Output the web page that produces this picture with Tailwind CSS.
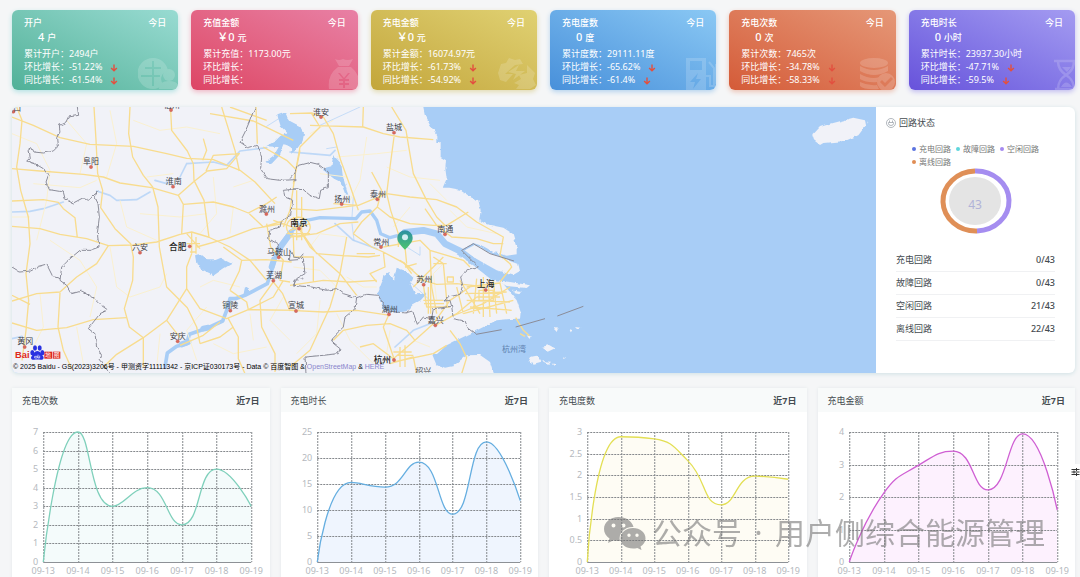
<!DOCTYPE html>
<html lang="zh-CN">
	<head>
		<title>充电运营看板</title>
		<meta charset="utf-8" />
		<meta name="viewport" content="width=device-width, initial-scale=1" />
		<script src="https://cdn.jsdelivr.net/npm/@tailwindcss/browser@4"></script>
	</head>
	<body class="h-screen overflow-hidden bg-[#f5f6f7] font-['Noto_Sans','Noto_Sans_CJK_SC',sans-serif] text-[9px] leading-[13px] text-[#444b50]">
		<main class="flex flex-col pl-3 pr-[5px] pt-[10px]">

			<!-- summary cards -->
			<section id="cards" class="grid grid-cols-6 gap-[13px]"></section>

			<!-- map + loop status -->
			<section class="mt-[17px] flex rounded-md bg-white shadow-[0_1px_4px_#cfe0e4]">
				<div class="relative min-w-0 flex-1 overflow-hidden rounded-l-md">
					<svg class="block h-[266px] w-full" viewBox="36 20 2592 800" preserveAspectRatio="xMinYMin slice">
						<defs>
							<filter id="rough" x="-5%" y="-5%" width="110%" height="110%">
								<feTurbulence type="fractalNoise" baseFrequency="0.06" numOctaves="2" seed="4" />
								<feDisplacementMap in="SourceGraphic" scale="10" xChannelSelector="R" yChannelSelector="G" />
							</filter>
							<linearGradient id="pin" x1="0" y1="0" x2="0" y2="1">
								<stop offset="0" stop-color="#2c8fa3" />
								<stop offset="1" stop-color="#4cc56f" />
							</linearGradient>
						</defs>
						<rect x="0" y="0" width="2700" height="840" fill="#a8cdf6" />

						<!-- land -->
						<g fill="#f1f2f8" filter="url(#rough)">
							<path d="M0 0H1266L1275 45L1290 75L1312 105V128H1322V170L1338 180L1336 205L1340 235L1328 262L1348 262L1380 268L1415 292L1435 300L1442 330L1438 360L1460 372L1510 382L1538 400L1550 440V462L1520 466L1480 455L1450 438L1420 428L1385 448L1370 462L1430 500L1470 530L1510 550L1530 575L1550 600L1562 635L1560 655L1530 656L1490 660L1450 680L1410 700L1370 720L1340 735L1310 762L1295 758L1308 790L1335 802L1360 797L1400 765L1440 764L1470 785L1485 830H0Z" />
							<path d="M1390 452L1425 433L1475 460L1555 492L1560 512L1538 525L1490 510L1430 476Z" />
							<path d="M1490 540L1530 545L1590 555L1580 563L1520 557ZM1540 568L1565 572L1558 582L1542 578Z" />
							<path d="M1625 740l22-6 18 10-22 10zM1590 770l20-4 14 18-22 6-18-8zM1625 782l28 2-6 8zM1660 680l14 2-4 10zM1708 686l10 4-6 6zM1725 680l16 2-8 6zM1690 768l8 4-8 4zM1580 705l16 4-8 6zM1655 790l14 0-8 6z" />
							<path d="M2437 105L2460 80L2500 68L2560 52L2595 60L2598 75L2575 105L2535 122L2470 128L2460 134L2442 120ZM2602 64l6 2-4 4z" />
						</g>

						<!-- rivers and lakes -->
						<g fill="#a8cdf6" filter="url(#rough)">
							<path d="M832 45L852 38L870 62L900 78L912 100L908 122L888 150L875 158L872 140L850 132L836 168L815 190L795 186L822 165L836 140L798 138L826 122L842 106L862 98L842 78Z" />
							<path d="M1000 165L1024 190L1028 225L1040 270L1045 283L1036 282L1022 245L1002 235L965 205L994 198Z" />
							<path d="M585 465L600 462L622 480L642 480L660 472L695 490L670 505L642 525L615 512L590 495Z" />
							<path d="M1150 525L1168 515L1182 540L1190 502L1218 512L1240 532L1232 552L1246 582L1280 580L1262 600L1240 612L1222 632L1190 638L1150 628L1132 580L1146 545Z" />
							<path d="M735 560L748 568L745 582L730 585Z" />
						</g>
						<g fill="none" stroke="#a8cdf6" stroke-linejoin="round" stroke-linecap="round">
							<path stroke-width="11" d="M495 800L502 758L530 738L560 730L568 702L620 684L668 662L682 625L690 595L706 595L735 585L802 550L818 500L836 440L870 395L920 360" />
							<path stroke-width="18" d="M815 500L822 478M838 445L872 398M545 732L565 725M610 685L625 682" />
							<path stroke-width="10" d="M920 360L960 352L1068 355L1085 335L1110 332L1130 360L1142 400L1170 412L1215 400" />
							<path stroke-width="20" d="M1215 396L1270 390L1310 400L1335 430L1380 452L1430 490L1480 530" />
							<path stroke-width="5" d="M36 335L90 333L130 325L190 305M290 272L330 285L350 300L410 298L450 275M465 240L500 250L500 238M36 715L66 708M560 190L640 185L680 195L720 152L800 142M540 230L560 190M870 155L930 160L990 165L1005 150M1005 370L1060 420L1130 445M1185 740L1240 690L1290 670" stroke-opacity=".7" />
							<path stroke-width="3" stroke-opacity=".6" d="M960 75L1080 20M800 78L860 40M980 145L1010 140M1230 545L1290 600L1340 600M1220 440L1260 465L1260 440M1060 290L1056 350M1056 370L1062 420" />
						</g>

						<!-- minor roads -->
						<g fill="none" stroke="#faf0cf" stroke-width="3" stroke-linejoin="round">
							<path d="M36 100L110 130L150 210L140 300L110 420M90 350L36 350M100 250L240 262L290 240M150 420L240 480L290 560L270 650M200 60L260 130L240 220M330 30L350 130L320 230M400 60L480 90L560 80L660 100M440 230L520 220M360 300L380 380L470 420M420 340L540 350L620 340M330 440L350 560L390 590L480 560L500 520M640 230L650 340L600 400M600 560L640 540L720 560M620 620L560 690L590 780M480 700L470 800M120 580L130 680L90 760M230 680L250 790M640 730L700 760L800 740M750 640L760 720M700 320L690 400M760 240L700 260M850 590L810 660L870 720" />
							<path d="M930 100L1000 60M1010 170L1130 160L1220 150M960 220L1040 230M1160 200L1230 230L1320 240M1050 300L1080 240L1100 110M1230 320L1180 380M930 440L960 400L1040 410M880 500L960 510L1010 560M960 600L950 700L890 760M1010 640L1050 720L1120 790M1170 690L1160 760M1240 720L1290 740M1330 490L1300 520L1310 600M1040 530L1090 560L1130 560M1350 330L1400 380L1490 400M1290 250L1340 300" />
						</g>

						<!-- major roads -->
						<g fill="none" stroke="#f8dc8e" stroke-width="4" stroke-linejoin="round">
							<path d="M36 50L100 75L180 112L270 132L400 138L500 160L560 174L640 178L720 210L765 245L825 310M50 20L66 60L60 130L50 200L62 270L85 350L90 430L78 520L86 600L78 690L66 780M282 20L288 120L293 220L308 270L302 322L345 385L392 430L400 470L398 540L373 625L388 680L430 712V800" />
							<path d="M36 205L120 212L250 222L310 230L360 248L455 262L535 285L550 312L545 400M390 20L386 100L398 170L430 225L458 260L474 320L478 440L500 560L562 622L590 680L600 730M36 302L130 298L175 306L190 325L225 352L232 412M36 378L120 385L180 402L260 415L325 436L400 434L470 425L540 402L575 395L625 410L690 440L750 480L800 540" />
							<path d="M512 30L515 90L562 152L580 190L582 240L612 300L627 412M665 20L682 75L705 150L718 212M550 312L640 305L700 320L745 338L800 310L830 290M535 285L580 245L622 212L680 205L718 160L640 165L618 212M610 115L620 150L608 180M748 340L790 380L850 362M590 440L680 415L760 385L850 370" />
							<path d="M575 460L560 500V565L600 625L680 655L745 628L900 630M560 565L500 660L430 712L350 762L310 800M325 436L290 490L230 530L180 575L110 580L36 602M36 585L90 612M180 578L174 680L190 750L215 805M36 668L110 690L200 682L280 658L380 652M500 660L540 712M685 655L715 710V775L735 820M660 665L610 705L540 735M690 570L740 605L745 628M690 570L718 512L725 480L800 478L875 485M725 480L670 440M820 545L780 600L785 680L825 760V815" />
							<path d="M820 545L848 580L870 632M800 370L812 440L850 480L840 540L870 545M768 20L772 130M790 140L860 180L890 210M850 380L870 330L886 220L900 150M690 20L800 60M630 40L760 62L880 120M820 360L890 385M745 628L820 590L850 540M600 730L660 710L700 680" />
							<path d="M870 40L935 38L970 50L1000 100L1022 180L1048 250L1075 330M930 75L1090 80L1150 100L1200 110L1300 118M935 40L960 80L900 140L880 250M1090 20L1088 80M1175 20L1218 90L1228 150L1240 220L1280 300L1310 350L1335 375M1182 110L1170 200L1160 280L1172 330L1195 400V440M1000 310L1075 315L1160 280L1230 290L1310 298L1370 320L1430 365L1510 410L1500 465L1530 490L1535 500L1500 545" />
							<path d="M870 325L950 330L1070 315M1115 215L1145 270L1132 320L1085 365L1060 400M1132 320L1170 350L1230 370L1300 375L1340 375L1405 335M1275 325L1310 375L1355 410L1430 415L1480 430H1510M897 385L950 460L1015 465L1105 470L1140 465M870 410L950 400L1020 370L1075 365M880 410L882 470L940 470V545M870 555L970 540L1050 545L1130 540M897 385L930 440L1020 520L1070 585M1040 410L1020 520L990 620L930 750L870 800" />
							<path d="M1060 400L1115 440L1150 455L1215 490L1270 540L1310 552L1370 550L1457 560M1150 455L1155 500L1110 520L1130 545M1070 460H1125M1215 440L1220 490M1150 440L1260 420L1290 450L1390 480L1410 500M1290 450L1295 560L1310 640M1240 560L1330 470M1300 470L1330 490M1300 490H1340M870 630L970 635L1070 630L1170 645M1167 642L1150 680L1182 775M1000 720L1030 690L1100 675L1170 670L1220 690L1245 720" />
							<path d="M1180 775L1245 720L1300 670L1350 600L1410 560M1306 675L1370 640L1430 590M1350 690L1380 730L1400 772L1385 820M1180 775L1120 730L1080 740M1270 553L1280 620L1350 620M1180 785L1300 760L1340 735M1270 600H1330M1272 610H1332M1285 560V640M1292 540V640M1342 530H1360V545H1342ZM1330 490L1342 620M1170 790L1240 770L1250 820M1200 740V800M1215 735V800M1180 755H1235M1190 765H1240" />
							<path d="M1547 652L1570 690L1588 706M1560 700L1575 708" />
							<path d="M1400 560L1500 548M1395 580L1520 575M1400 600L1530 605M1410 620L1535 630M1380 540L1440 640M1430 535L1420 640M1450 530L1450 650M1465 540L1470 650M1480 540L1490 640M1500 548L1520 640M1370 560L1390 640M1390 640L1540 600M1430 590L1500 590M1350 650L1450 610L1530 560M1437 570H1480V600H1437Z" />
							<path d="M860 375a34 28 0 1 0 70 10a34 28 0 1 0 -70 -10M870 390L930 370M890 270V420M905 290V420M880 350L920 420M860 400H930M1200 480L1240 510M1215 500L1250 490M1210 485L1235 520M560 430H600M570 455H590M575 395V460M588 410V460M560 400L600 445" />
						</g>

						<!-- province borders -->
						<g fill="none" stroke="#8b8c98" stroke-width="3" stroke-linejoin="round" filter="url(#rough)">
							<path d="M232 20L236 45L205 50L198 65L178 75L180 95L170 112L172 140L160 152L130 158L102 155L95 142L84 150L88 175L80 182L105 190L130 205L145 225L138 245L148 268L190 275L195 295L220 308L250 292L265 300L295 272L285 290L294 310L298 350L292 400L297 440L270 450L240 450L210 475L185 500L180 540L200 555L215 580L245 572L280 590L300 610L325 628L300 640L278 668L265 685L285 700L290 740L305 765L300 780L330 820" />
							<path d="M36 500L60 515L92 512L118 498L140 492L158 528L180 535M765 20L750 60L735 95L720 125L745 142L770 135L785 170L782 205L800 235L840 240L888 238V210M895 265L850 270L855 290L878 300L872 345L845 360L840 380L810 390L806 415L835 432L838 445M870 465L868 480L895 478L910 460M882 560L885 540L910 535" />
							<path d="M870 235L885 218L895 195L930 186L955 192L985 215V262L962 270L958 295L930 285L910 268L870 265M870 450L880 470L910 475L915 520L890 535L880 555L935 560L980 570L1010 565L1030 580L1070 592L1100 582L1135 585L1150 612L1165 632L1215 638L1238 632L1252 672L1270 650L1295 655L1300 625L1355 618L1360 655L1395 662L1405 685L1428 702" />
							<path d="M1355 618L1350 600L1332 602L1345 590L1380 582L1388 555L1382 530L1400 512L1435 500L1385 450M1070 592L1065 625L1035 650L1030 680L1000 710L995 725L1020 745L1015 760L970 765L915 770L918 820" />
						</g>
						<path d="M1385 450L1420 430L1470 460L1542 482M1428 702L1505 688M1547 680L1635 655M1672 647L1750 618" fill="none" stroke="#8b8c98" stroke-width="3" />

						<!-- cities -->
						<g id="cities" font-size="24" text-anchor="middle" fill="#3d3f47"></g>

						<g>
							<path d="M1215 448C1198 430 1192 424 1192 412a23 22 0 0 1 46 0C1238 424 1232 430 1215 448Z" fill="url(#pin)" />
							<circle cx="1215" cy="411" r="9" fill="#d3edf2" />
						</g>

						<!-- Baidu mark -->
						<g>
							<text x="45" y="774" font-family="Liberation Sans" font-weight="700" font-size="28" fill="#df2a20">Bai</text>
							<rect x="133" y="754" width="23" height="21" fill="#df2a20" />
							<rect x="158" y="754" width="23" height="21" fill="#df2a20" />
							<text x="136" y="771" font-size="17" fill="#fff">地</text>
							<text x="161" y="771" font-size="17" fill="#fff">图</text>
							<g fill="#2932e1">
								<ellipse cx="97" cy="757" rx="6" ry="8" />
								<ellipse cx="105" cy="743" rx="6" ry="8" />
								<ellipse cx="119" cy="743" rx="6" ry="8" />
								<ellipse cx="127" cy="757" rx="6" ry="8" />
								<path d="M112 752c8 0 12 10 16 14 6 6 2 13-6 12-6-1-14-1-20 0-8 1-12-6-6-12 4-4 8-14 16-14z" />
							</g>
							<path d="M104 768h8v5h-8zM114 763v10h5v-7" fill="none" stroke="#fff" stroke-width="2" />
						</g>
					</svg>
					<p class="absolute bottom-0 left-px whitespace-nowrap font-['Liberation_Sans','Noto_Sans_CJK_SC',sans-serif] text-[7px] text-black">© 2025 Baidu - GS(2023)3206号 - 甲测资字11111342 - 京ICP证030173号 - Data © 百度智图 &amp; <a href="#" class="text-[#8a86cc]">OpenStreetMap</a> &amp; <a href="#" class="text-[#8a86cc]">HERE</a></p>
				</div>

				<aside class="w-[199px] shrink-0 px-[10px] pt-[9px]">
					<h2 class="flex items-center gap-[3px]">
						<svg class="size-[10px]" viewBox="0 0 20 20" fill="none" stroke="#9aa0a8" stroke-width="1.5">
							<circle cx="10" cy="10" r="9" />
							<path d="M7 5v4M13 5v4M5 9h10v2a5 4 0 0 1-10 0z" />
						</svg>
						回路状态
					</h2>
					<ul class="mx-auto mt-[13px] flex w-[127px] flex-wrap gap-x-[5px] text-[8px] text-[#777]">
						<li class="flex items-center gap-[3px]"><i class="size-1 rounded-full bg-[#5b73e0]"></i>充电回路</li>
						<li class="flex items-center gap-[3px]"><i class="size-1 rounded-full bg-[#5fd6dc]"></i>故障回路</li>
						<li class="flex items-center gap-[3px]"><i class="size-1 rounded-full bg-[#a58af0]"></i>空闲回路</li>
						<li class="flex items-center gap-[3px]"><i class="size-1 rounded-full bg-[#e08d54]"></i>离线回路</li>
					</ul>
					<svg class="mx-auto h-[66px] w-[72px]" viewBox="0 0 72 66">
						<path d="M35 3A33 30 0 0 1 37 63" fill="none" stroke="#a58df0" stroke-width="5" />
						<path d="M37 63A33 30 0 1 1 35 3" fill="none" stroke="#df8f57" stroke-width="5" />
						<ellipse cx="35" cy="33" rx="26" ry="24" fill="#e4e4e4" />
						<text x="35" y="41" text-anchor="middle" font-size="12" fill="#b1b3d8">43</text>
					</svg>
					<table class="mx-[10px] mt-[14px] w-[159px]">
						<tr class="h-[23px] border-b border-[#f0f1f3]"><th scope="row" class="text-left font-normal">充电回路</th><td class="text-right font-medium">0/43</td></tr>
						<tr class="h-[23px] border-b border-[#f0f1f3]"><th scope="row" class="text-left font-normal">故障回路</th><td class="text-right font-medium">0/43</td></tr>
						<tr class="h-[23px] border-b border-[#f0f1f3]"><th scope="row" class="text-left font-normal">空闲回路</th><td class="text-right font-medium">21/43</td></tr>
						<tr class="h-[23px] border-b border-[#f0f1f3]"><th scope="row" class="text-left font-normal">离线回路</th><td class="text-right font-medium">22/43</td></tr>
					</table>
				</aside>
			</section>

			<!-- 7 day charts -->
			<section id="charts" class="mt-[15px] grid grid-cols-4 gap-[11px]"></section>
		</main>

		<button aria-label="设置" class="fixed right-0 top-[464px] flex h-4 w-[10px] items-center justify-end rounded-l-sm bg-white">
			<svg class="h-[10px] w-[9px]" viewBox="0 0 18 20" fill="none" stroke="#333" stroke-width="2">
				<path d="M1 5h16M1 10h16M1 15h16M11 2v6M6 7v6M11 12v6" />
			</svg>
		</button>

		<!-- watermark -->
		<div class="pointer-events-none fixed bottom-[22px] right-[35px] flex items-center whitespace-nowrap text-[30px] leading-[44px] text-[#777]/60">
			<svg class="mr-[6px] h-[34px] w-[42px]" viewBox="0 0 42 34">
				<path fill="#777" fill-opacity=".6" fill-rule="evenodd" d="M14.500 1C6.500 1 0 6 0 13c0 4 2 7 5.500 9.500L4 27l5.500-2.700c2 .5 4 .9 6.500.7-2-8 5-14.500 13.500-14C28 5 22 1 14.500 1zM9.500 7.500a2 2 0 1 1 0 4 2 2 0 0 1 0-4zM19.500 7.500a2 2 0 1 1 0 4 2 2 0 0 1 0-4z" />
				<path fill="#777" fill-opacity=".6" fill-rule="evenodd" d="M29 12c-7 0-12.500 4.500-12.500 10.500S22 32.500 29 32.500c1.500 0 3-.2 4.300-.6L37.500 34l-1-3.500C39.500 28.500 41.500 26 41.500 22.500 41.500 16.500 36 12 29 12zM25 17.500a1.700 1.700 0 1 1 0 3.400 1.700 1.700 0 0 1 0-3.400zM33 17.500a1.700 1.700 0 1 1 0 3.400 1.700 1.700 0 0 1 0-3.400z" />
			</svg>
			<span>公众号</span><span class="w-[33px] text-center">·</span><span>用户侧综合能源管理</span>
		</div>

		<script>
			const cards = [
				{ title: '开户', value: '4', unit: '户', total: '累计开户：2494户', rates: ['-51.22%', '-61.54%'],
				  style: 'from-[#50b198] to-[#98dbd2] shadow-[0_2px_5px_#b5e2e3]', iconSize: 'w-10', box: '0 0 40 32',
				  icon: '<path fill-rule="evenodd" d="M15 0a15 15 0 0 1 15 13a8 8 0 0 0-5 13q-4 5-10 5a15 15 0 0 1 0-31zM14 3v6H7v2h7v6H3v2h11v9h2v-9h6v-2h-6v-6h7V9h-7V3z"/><circle cx="31" cy="17" r="6"/><path d="M21 31q0-8 10-8t10 8z"/>' },
				{ title: '充值金额', value: '￥0', unit: '元', total: '累计充值：1173.00元', rates: ['', ''],
				  style: 'from-[#dd4565] to-[#e880a5] shadow-[0_2px_5px_#efb8c6]', iconSize: 'w-[30px]', box: '0 0 30 32',
				  icon: '<path d="M7 1q4 2 8 0 4 2 10 0l-4 7H11z"/><path fill-rule="evenodd" d="M10 9h13q10 8 9 22H1Q-1 17 10 9zM10 15l5 6h-4v2h4v2h-4v2h4v3h2v-3h4v-2h-4v-2h4v-2h-4l5-6h-2l-4 5-4-5z"/>' },
				{ title: '充电金额', value: '￥0', unit: '元', total: '累计金额：16074.97元', rates: ['-61.73%', '-54.92%'],
				  style: 'from-[#c3a63a] to-[#e0d172] shadow-[0_2px_5px_#e2dab0]', iconSize: 'w-10', box: '0 0 40 32',
				  icon: '<path d="M1 15L4 6l5-1 3-5 6 2 5-1 3 5-8 1-10 9 8 0-7 8-6-2zM11 14l11-7-3 6h9l-12 9 3-6zM30 7l4 4 4 4-2 6 3 6-6 4H19l3-4-5-2 7-4-2-4 8-2z"/>' },
				{ title: '充电度数', value: '0', unit: '度', total: '累计度数：29111.11度', rates: ['-65.62%', '-61.4%'],
				  style: 'from-[#4890da] to-[#8ac8f4] shadow-[0_2px_5px_#b5d3ee]', iconSize: 'w-[30px]', box: '0 0 30 32',
				  icon: '<path fill-rule="evenodd" d="M0 0h20v32H0zM4 3v9h12V3zM12 15l-8 9h5l-2 7 8-10h-5z"/><path fill="none" stroke="#fff" stroke-width="2" d="M20 18h4v10h4V10l-5-6M30 6v20"/>' },
				{ title: '充电次数', value: '0', unit: '次', total: '累计次数：7465次', rates: ['-34.78%', '-58.33%'],
				  style: 'from-[#d45b38] to-[#e59777] shadow-[0_2px_5px_#ecc3b5]', iconSize: 'w-9', box: '0 0 36 32',
				  icon: '<ellipse cx="14" cy="5" rx="14" ry="5"/><path d="M0 8q14 8 28 0v5q-14 8-28 0zM0 16q14 8 26 0-9 3-9 8-10 1-17-3zM0 24q8 4 17 3l2 4Q4 32 0 28z"/><path fill-rule="evenodd" d="M26 15a9 9 0 1 1 0 18 9 9 0 0 1 0-18zM20 24l5 5 8-8-2-2-6 6-3-3z"/>' },
				{ title: '充电时长', value: '0', unit: '小时', total: '累计时长：23937.30小时', rates: ['-47.71%', '-59.5%'],
				  style: 'from-[#6852db] to-[#a49bf1] shadow-[0_2px_5px_#c2bdf0]', iconSize: 'w-[21px]', box: '0 0 21 32',
				  icon: '<path fill="none" stroke="#fff" stroke-width="2.500" d="M0 3h24M4 3q0 9 8 14Q4 22 4 31M20 3q0 9-8 14 8 5 8 14M1 31h22"/><path d="M8 9h9l-4 5zM7 29q5-9 11 0z"/>' }
			];

			const arrow = '<svg class="ml-2 inline-block size-2" viewBox="0 0 14 14" fill="none" stroke="#e2503f" stroke-width="2.5"><path d="M7 1v11M2 7l5 5 5-5"/></svg>';
			const labels = ['环比增长', '同比增长'];

			document.querySelector('#cards').innerHTML = cards.map(c => `
				<article class="relative h-20 overflow-hidden rounded-md bg-linear-to-tr px-3 pt-[6px] text-white ${c.style}">
					<svg class="absolute bottom-0 right-0 h-8 ${c.iconSize}" viewBox="${c.box}" fill="#fff" opacity=".17">${c.icon}</svg>
					<h3 class="flex justify-between font-medium"><span>${c.title}</span><span>今日</span></h3>
					<p class="mb-px pl-[14px] text-[11px] leading-4 font-medium">${c.value} <span class="text-[9px]">${c.unit}</span></p>
					<p>${c.total}</p>
					${c.rates.map((r, i) => `<p>${labels[i]}：${r}${r ? arrow : ''}</p>`).join('')}
				</article>`).join('');

			// [name, label x, label y, dot x, dot y, capital]
			const cities = [
				['周口', 40, 22, 40, 34], ['宿州', 515, 15, 513, 29], ['阜阳', 273, 183, 273, 200], ['淮南', 521, 242, 519, 259],
				['滁州', 801, 325, 799, 341], ['六安', 420, 440, 420, 457], ['合肥', 533, 439, 569, 438, 1], ['马鞍山', 837, 455, 836, 471],
				['芜湖', 822, 524, 820, 541], ['铜陵', 691, 615, 691, 631], ['安庆', 533, 707, 533, 723], ['黄冈', 76, 722, 74, 740],
				['淮安', 963, 35, 963, 50], ['盐城', 1182, 80, 1182, 97], ['扬州', 1027, 295, 1025, 311], ['泰州', 1134, 281, 1132, 297],
				['南京', 897, 367, 897, 385, 1], ['常州', 1144, 424, 1143, 440], ['南通', 1336, 386, 1335, 402], ['苏州', 1273, 537, 1271, 553],
				['上海', 1457, 551, 1457, 569, 1], ['湖州', 1169, 626, 1167, 642], ['嘉兴', 1307, 660, 1306, 675], ['宣城', 888, 615, 888, 632],
				['杭州', 1147, 779, 1182, 779, 1], ['绍兴', 1270, 812], ['杭州湾', 1542, 745]
			];
			document.querySelector('#cities').innerHTML = cities.map(([name, x, y, dx, dy, capital]) =>
				(dx ? `<circle cx="${dx}" cy="${dy}" r="5" fill="#d9685c" stroke="#b9584f"/>` : '') +
				`<text x="${x}" y="${y + 9}"${capital ? ' font-size="26" font-weight="500" fill="#222"' : ''}${name === '杭州湾' ? ' fill="#5d7fae"' : ''}>${name}</text>`
			).join('');

			const days = ['09-13', '09-14', '09-15', '09-16', '09-17', '09-18', '09-19'];
			const charts = [
				{ title: '充电次数', left: 31, max: 7, step: 1, data: [0, 7, 3, 4, 2, 5, 3], color: '#7fd0bb', fill: '#f4fbfb' },
				{ title: '充电时长', left: 36, max: 25, step: 5, data: [0, 15.3, 14.4, 19.2, 9.2, 23.1, 11.8], color: '#65aee0', fill: '#eff5fe' },
				{ title: '充电度数', left: 38, max: 3, step: 0.5, data: [0, 2.89, 2.84, 2.34, 1.32, 1.98, 1.91], color: '#e3df54', fill: '#fefcf4' },
				{ title: '充电金额', left: 31, max: 4, step: 1, data: [0, 2.13, 2.98, 3.41, 2.22, 3.94, 1.6], color: '#cf5fd3', fill: '#fdf1fe' }
			];
			const plotTop = 20, plotBottom = 150, plotRight = 239;

			const clamp = (v, a, b) => Math.max(Math.min(v, Math.max(a, b)), Math.min(a, b));

			// smooth line that never overshoots its neighbours
			function curve(pts) {
				let d = `M${pts[0]}`;
				let [cx, cy] = pts[0];
				for (let i = 1; i < pts.length; i++) {
					const [x, y] = pts[i], [px, py] = pts[i - 1];
					let ax = x, ay = y, nx = x, ny = y;
					if (i < pts.length - 1) {
						const [qx, qy] = pts[i + 1];
						const prev = Math.hypot(x - px, y - py), next = Math.hypot(qx - x, qy - y);
						const k = 0.5 * next / (next + prev);
						nx = clamp(x + (qx - px) * k, x, qx);
						ny = clamp(y + (qy - py) * k, y, qy);
						ax = clamp(x - (nx - x) * prev / next, px, x);
						ay = clamp(y - (ny - y) * prev / next, py, y);
						nx = x + (x - ax) * next / prev;
						ny = y + (y - ay) * next / prev;
					}
					d += `C${cx},${cy} ${ax},${ay} ${x},${y}`;
					cx = nx;
					cy = ny;
				}
				return d;
			}

			document.querySelector('#charts').innerHTML = charts.map(c => {
				const xs = days.map((_, i) => c.left + (plotRight - c.left) * i / 6);
				const yOf = v => plotBottom - (plotBottom - plotTop) * v / c.max;
				const line = curve(c.data.map((v, i) => [xs[i], yOf(v)]));
				let grid = '', text = '';
				for (let v = 0; v <= c.max; v += c.step) {
					const y = Math.round(yOf(v)) + 0.5;
					if (v) grid += `<path d="M${c.left} ${y}H${plotRight}"/>`;
					text += `<text x="${c.left - 5}" y="${y + 2}" text-anchor="end">${v}</text>`;
				}
				xs.forEach((x, i) => {
					grid += `<path d="M${Math.round(x) + 0.5} ${plotTop}V${plotBottom}"/>`;
					text += `<text x="${x}" y="162" text-anchor="middle">${days[i]}</text>`;
				});
				return `
				<article class="bg-white shadow-[0_0_3px_#e3e8ea]">
					<h3 class="flex h-6 items-center justify-between bg-[#f8fafa] px-[10px]"><span>${c.title}</span><span class="font-bold">近7日</span></h3>
					<svg class="block h-[180px] w-full" viewBox="0 0 257 180" preserveAspectRatio="xMidYMin meet">
						<path d="${line}V${plotBottom}H${c.left}Z" fill="${c.fill}"/>
						<g fill="none" stroke="#85888c" stroke-dasharray="2 1">${grid}</g>
						<path d="M${c.left} ${plotBottom + 0.5}H${plotRight}" stroke="#8d9196"/>
						<path d="${line}" fill="none" stroke="${c.color}" stroke-width="1.300"/>
						<g fill="#b5b9be" font-size="9">${text}</g>
					</svg>
				</article>`;
			}).join('');
		</script>
	</body>
</html>
